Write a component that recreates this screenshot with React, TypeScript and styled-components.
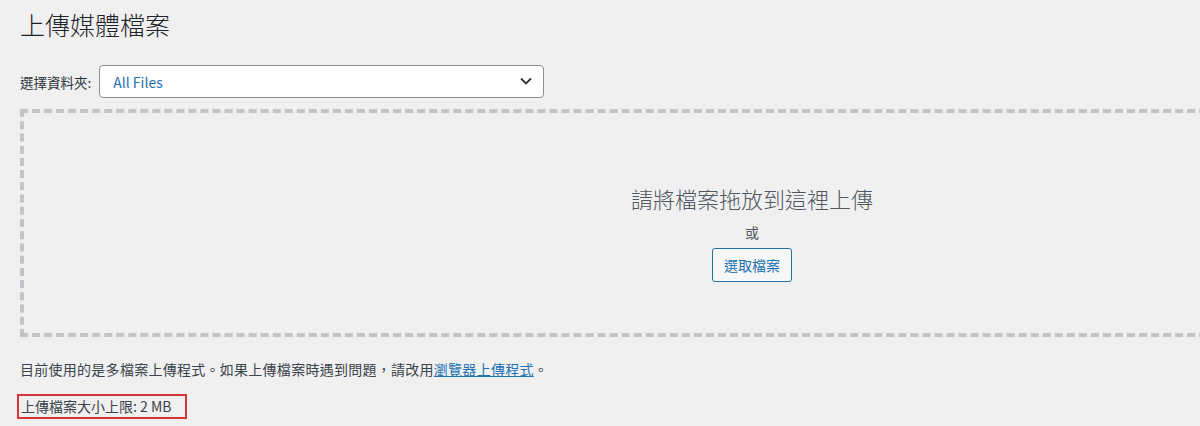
import {createGlobalStyle, styled} from "styled-components";

const GlobalStyle = createGlobalStyle`
    html, body {
        margin: 0;
        padding: 0;
        background-color: #f0f0f1;
        overflow: hidden;
    }

    body {
        font-family: "Noto Sans CJK TC", "Noto Sans", sans-serif;
        color: #3c434a;
    }
`;

const App = () => {
    return (
        <>
            <GlobalStyle/>
            <PageStyled>
                <h1>上傳媒體檔案</h1>

                <div className="folder-row">
                    <label htmlFor="folder">選擇資料夾:</label>
                    <div className="select-wrap">
                        <select id="folder" defaultValue="all">
                            <option value="all">All Files</option>
                        </select>
                        <svg viewBox="0 0 20 20" width="20" height="20" aria-hidden="true">
                            <path d="M5 7.5 L10 12.5 L15 7.5" fill="none" stroke="#2c3338" strokeWidth="1.8"/>
                        </svg>
                    </div>
                </div>

                <DropArea>
                    <p className="drop-title">請將檔案拖放到這裡上傳</p>
                    <p className="drop-or">或</p>
                    <button type="button">選取檔案</button>
                </DropArea>

                <p className="info">
                    目前使用的是多檔案上傳程式。如果上傳檔案時遇到問題，請改用<a href="#">瀏覽器上傳程式</a>。
                </p>

                <div className="limit">上傳檔案大小上限: 2 MB</div>
            </PageStyled>
        </>
    );
};

export default App;

const PageStyled = styled.div`
    padding: 0 20px;
    height: 426px;
    overflow: hidden;

    h1 {
        margin: 0;
        padding-top: 7px;
        font-size: 25px;
        font-weight: 300;
        line-height: 34px;
        color: #1d2327;
    }

    .folder-row {
        display: flex;
        align-items: center;
        margin-top: 24px;
        height: 33px;

        label {
            font-size: 13.5px;
            color: #2c3338;
            margin-right: 8px;
        }

        .select-wrap {
            position: relative;
            display: flex;

            svg {
                position: absolute;
                right: 8px;
                top: 6px;
                pointer-events: none;
            }
        }

        select {
            appearance: none;
            width: 445px;
            height: 33px;
            padding: 0 30px 0 13px;
            border: 1px solid #8c8f94;
            border-radius: 4px;
            background-color: #fff;
            color: #2271b1;
            font-family: "Noto Sans CJK TC", "Noto Sans", sans-serif;
            font-size: 14px;
            outline: none;
        }
    }

    .info {
        margin: 22px 0 0;
        font-size: 14px;
        line-height: 20px;
        letter-spacing: 0.27px;
        color: #3c434a;

        a {
            color: #2271b1;
            text-decoration: underline;
        }
    }

    .limit {
        display: inline-block;
        margin-top: 15px;
        margin-left: -3px;
        padding: 0 2px;
        border: 2px solid #d63638;
        font-size: 14px;
        line-height: 21px;
        color: #3c434a;
        width: 162px;
    }
`;

const DropArea = styled.div`
    margin-top: 11px;
    width: 1464px;
    height: 228px;
    border: 4px dashed #c3c4c7;
    display: flex;
    flex-direction: column;
    align-items: center;
    padding-top: 70px;
    box-sizing: border-box;

    p {
        margin: 0;
    }

    .drop-title {
        font-size: 22px;
        line-height: 30px;
        font-weight: 300;
        color: #50575e;
    }

    .drop-or {
        margin-top: 9px;
        font-size: 14px;
        line-height: 20px;
        color: #50575e;
    }

    button {
        margin-top: 6px;
        height: 34px;
        padding: 0 11px;
        border: 1px solid #2271b1;
        border-radius: 3px;
        background-color: #f6f7f7;
        color: #2271b1;
        font-family: "Noto Sans CJK TC", "Noto Sans", sans-serif;
        font-size: 14px;
        cursor: pointer;
    }
`;
